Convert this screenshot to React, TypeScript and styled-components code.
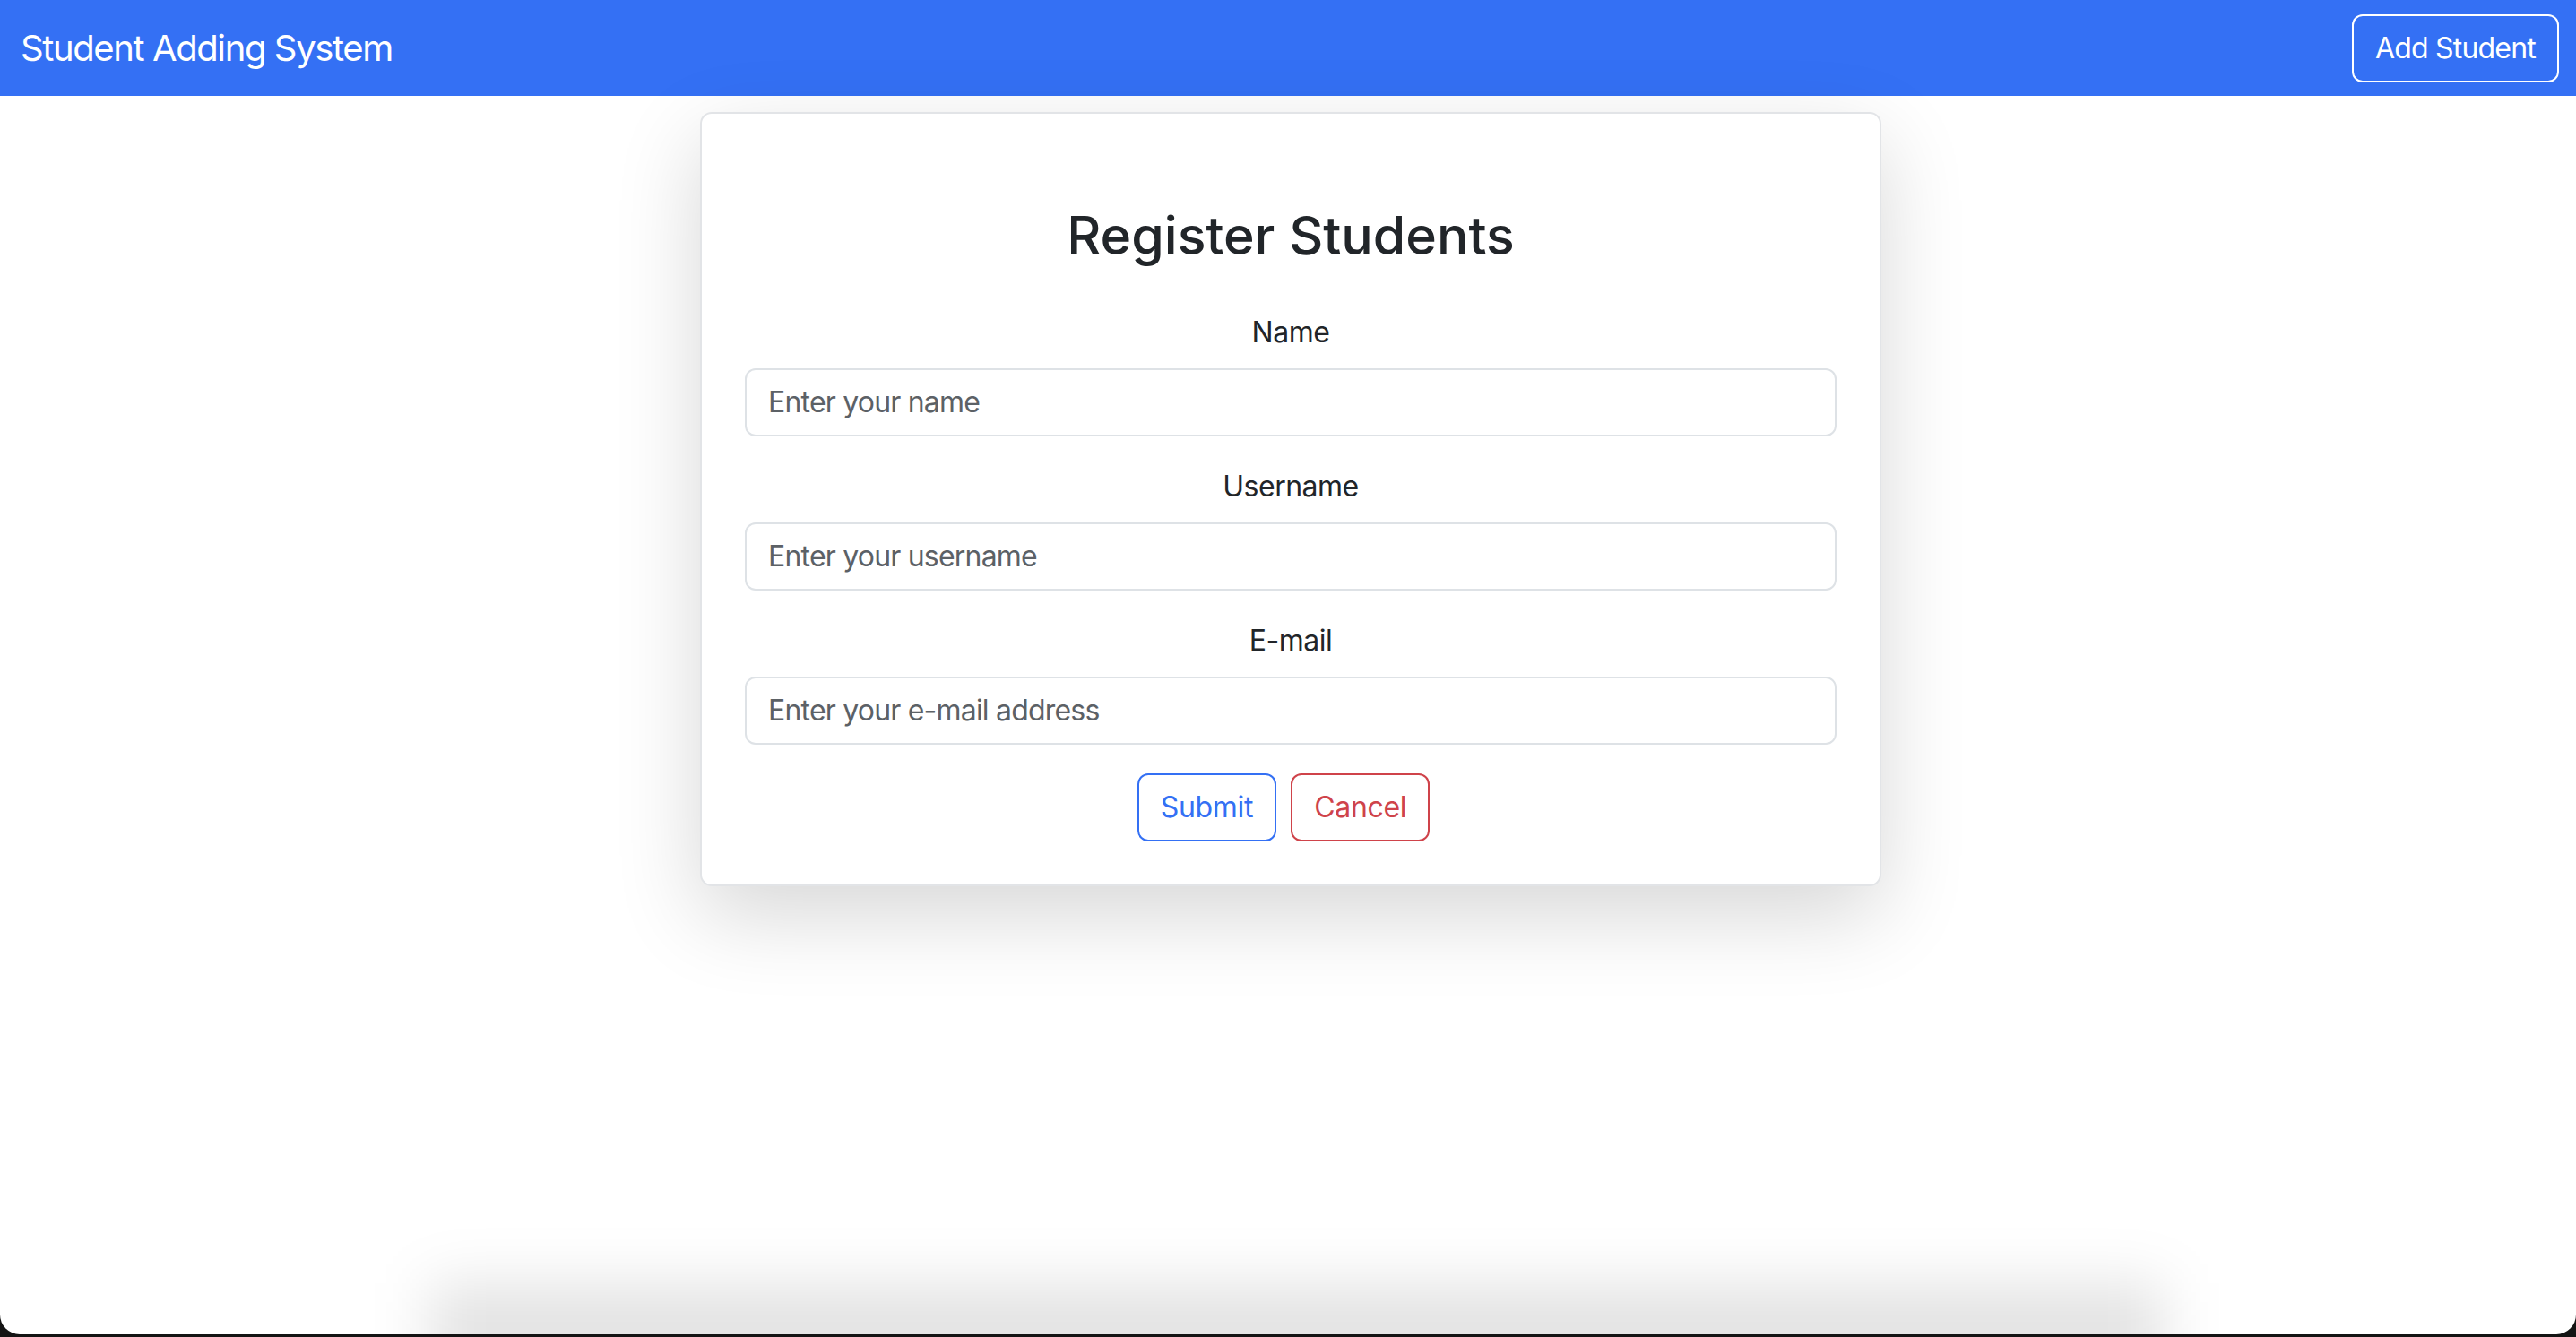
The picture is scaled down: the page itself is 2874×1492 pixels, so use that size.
import React from "react";
import styled, { createGlobalStyle } from "styled-components";

const GlobalStyle = createGlobalStyle`
  html, body {
    margin: 0;
    padding: 0;
    background: #ffffff;
    font-family: Inter, "Noto Sans", "Liberation Sans", sans-serif;
    color: #212529;
  }
  * { box-sizing: border-box; }
`;

const Page = styled.div`
  min-height: 100vh;
  display: flex;
  flex-direction: column;
`;

const NavBar = styled.nav`
  height: 107px;
  background: #3470f4;
  display: flex;
  align-items: center;
  justify-content: space-between;
  padding: 0 19px 0 23px;
`;

const Brand = styled.span`
  font-size: 40px;
  color: #ffffff;
  font-weight: 400;
  letter-spacing: -1.4px;
`;

const NavButton = styled.button`
  height: 76px;
  padding: 0 24px;
  border: 2px solid #ffffff;
  border-radius: 12px;
  background: transparent;
  color: #ffffff;
  font-family: inherit;
  font-size: 32px;
  letter-spacing: -0.8px;
`;

const Main = styled.main`
  display: flex;
  justify-content: center;
  padding: 18px 0 0 6px;
`;

const Card = styled.form`
  width: 1318px;
  background: #ffffff;
  border: 2px solid #e2e4e7;
  border-radius: 13px;
  padding: 48px;
  box-shadow: 0 32px 96px rgba(0, 0, 0, 0.16);
  display: flex;
  flex-direction: column;
`;

const Heading = styled.h3`
  margin: 53px 0 48px;
  font-size: 59px;
  line-height: 1.2;
  font-weight: 500;
  text-align: center;
  color: #212529;
  letter-spacing: 0;
`;

const Field = styled.div`
  display: flex;
  flex-direction: column;
  margin-bottom: 32px;
`;

const Label = styled.label`
  display: block;
  text-align: center;
  font-size: 32px;
  line-height: 48px;
  margin-bottom: 16px;
  color: #212529;
  letter-spacing: -0.5px;
`;

const Input = styled.input`
  height: 76px;
  width: 100%;
  padding: 0 24px;
  border: 2px solid #dee2e6;
  border-radius: 12px;
  font-family: inherit;
  font-size: 32px;
  color: #212529;
  outline: none;
  letter-spacing: -0.8px;
  &::placeholder {
    color: #5c6166;
  }
`;

const Actions = styled.div`
  display: flex;
  justify-content: center;
`;

const OutlineButton = styled.button<{ $color: string }>`
  height: 76px;
  padding: 0 24px;
  margin-right: 16px;
  border: 2px solid ${(p) => p.$color};
  border-radius: 12px;
  background: #ffffff;
  color: ${(p) => p.$color};
  font-family: inherit;
  font-size: 32px;
  letter-spacing: -0.3px;
`;

const WindowFrame = styled.div`
  position: fixed;
  left: 0;
  right: 0;
  top: 0;
  bottom: 3px;
  border-bottom-left-radius: 22px;
  border-bottom-right-radius: 22px;
  box-shadow: 0 0 0 60px #141414;
  pointer-events: none;
`;

const BottomShade = styled.div`
  position: fixed;
  left: 480px;
  right: 460px;
  bottom: -50px;
  height: 110px;
  background: rgba(0, 0, 0, 0.11);
  filter: blur(32px);
  pointer-events: none;
`;

const fields = [
  { id: "name", label: "Name", placeholder: "Enter your name", type: "text" },
  { id: "username", label: "Username", placeholder: "Enter your username", type: "text" },
  { id: "email", label: "E-mail", placeholder: "Enter your e-mail address", type: "email" },
];

export default function App() {
  return (
    <>
      <GlobalStyle />
      <Page>
        <NavBar>
          <Brand>Student Adding System</Brand>
          <NavButton type="button">Add Student</NavButton>
        </NavBar>
        <Main>
          <Card onSubmit={(e) => e.preventDefault()}>
            <Heading>Register Students</Heading>
            {fields.map((f) => (
              <Field key={f.id}>
                <Label htmlFor={f.id}>{f.label}</Label>
                <Input id={f.id} type={f.type} placeholder={f.placeholder} />
              </Field>
            ))}
            <Actions>
              <OutlineButton type="submit" $color="#3470f4">Submit</OutlineButton>
              <OutlineButton type="button" $color="#cf434a">Cancel</OutlineButton>
            </Actions>
          </Card>
        </Main>
      </Page>
      <BottomShade />
      <WindowFrame />
    </>
  );
}
